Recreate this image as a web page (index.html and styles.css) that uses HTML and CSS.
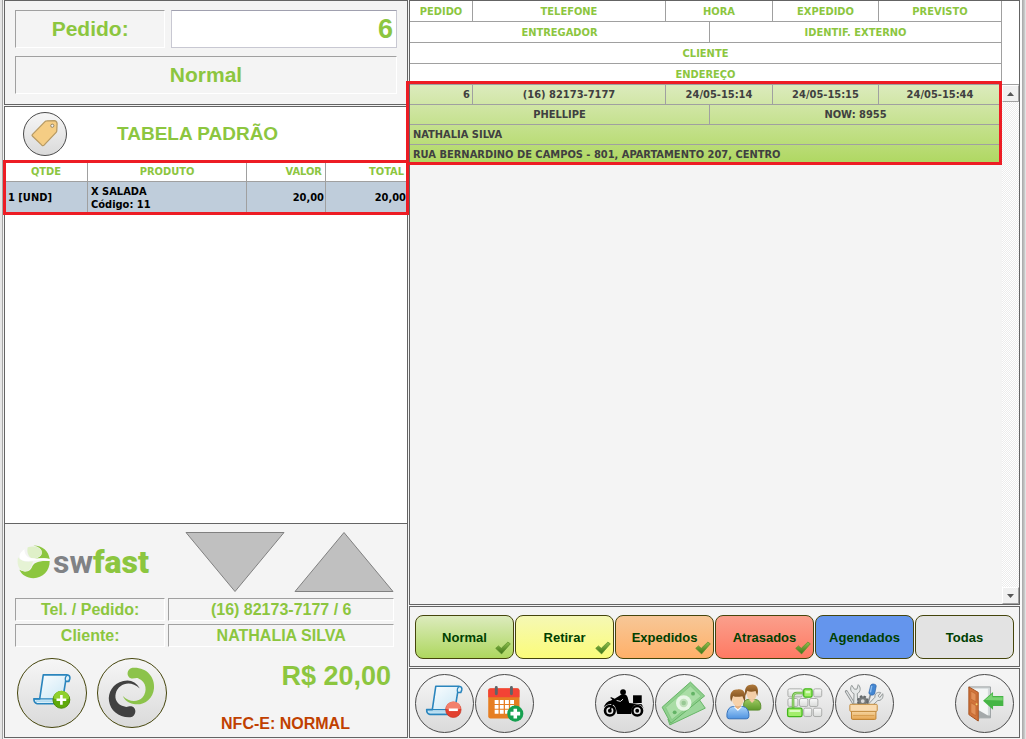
FILE: index.html
```html
<!DOCTYPE html>
<html lang="pt-BR">
<head>
  <meta charset="UTF-8">
  <meta name="viewport" content="width=device-width, initial-scale=1.0">
  <title>swfast - Delivery</title>
  <link rel="stylesheet" href="styles.css">
</head>
<body>

  <!-- shared gradients and symbols -->
  <svg class="defs" width="0" height="0" aria-hidden="true">
    <defs>
      <linearGradient id="paper" x1="0" y1="0" x2="1" y2="1">
        <stop offset="0" stop-color="#ffffff"/>
        <stop offset="1" stop-color="#c3e4f4"/>
      </linearGradient>
      <linearGradient id="check-fill" x1="0" y1="0" x2="0" y2="1">
        <stop offset="0" stop-color="#8fc24c"/>
        <stop offset="1" stop-color="#3f7318"/>
      </linearGradient>
      <linearGradient id="blue" x1="0" y1="0" x2="0" y2="1">
        <stop offset="0" stop-color="#a9d3fa"/>
        <stop offset="1" stop-color="#4f93e0"/>
      </linearGradient>
      <linearGradient id="green" x1="0" y1="0" x2="0" y2="1">
        <stop offset="0" stop-color="#9cc860"/>
        <stop offset="1" stop-color="#5e9a2c"/>
      </linearGradient>
      <linearGradient id="hair" x1="0" y1="0" x2="0" y2="1">
        <stop offset="0" stop-color="#b07a3c"/>
        <stop offset="1" stop-color="#6f4213"/>
      </linearGradient>
      <linearGradient id="wood" x1="0" y1="0" x2="0" y2="1">
        <stop offset="0" stop-color="#f6d7a4"/>
        <stop offset="1" stop-color="#e5a550"/>
      </linearGradient>
      <linearGradient id="key" x1="0" y1="0" x2="0" y2="1">
        <stop offset="0" stop-color="#fafafa"/>
        <stop offset="1" stop-color="#d9dbd9"/>
      </linearGradient>
    </defs>
    <symbol id="scroll" viewBox="0 0 120 100">
      <path d="M33 6H106Q117 7 115 18L112 26H102L92 88Q92 95 84 95H14Q4 93 4 80H22Z" fill="url(#paper)" stroke="#2a85bd" stroke-width="5" stroke-linejoin="round"/>
      <path d="M102 26Q98 12 108 7M4 80H78Q78 92 86 95" fill="none" stroke="#2a85bd" stroke-width="4"/>
      <path d="M10 87H74" stroke="#b4dcf0" stroke-width="5"/>
    </symbol>
    <symbol id="check" viewBox="0 0 46 38">
      <path d="M2 20L10 13L18 20L37 2L44 7L19 36Z" fill="url(#check-fill)" stroke="#5a8d2b" stroke-width="2" stroke-linejoin="round"/>
    </symbol>
  </svg>

  <main class="screen">
    <section class="left">
      <div class="panel order-info">
        <div class="pair">
          <label class="field big" for="pedido">Pedido:</label>
          <input class="order-number" id="pedido" type="text" value="6">
        </div>
        <div class="field big">Normal</div>
      </div>

      <div class="panel items">
        <div class="price-table">
          <button class="round small" type="button" aria-label="Tabela de preço">
            <svg viewBox="0 0 132 132">
              <path d="M26 68L66 27Q68 25 71 25L95 24Q103 25 104 33L103 56Q103 59 101 61L63 101Q60 104 56 101L27 73Q24 70 26 68Z" fill="#f5cd84" stroke="#b79a63" stroke-width="4"/>
              <circle cx="89" cy="40" r="5" fill="#f4f4f4" stroke="#8d8064" stroke-width="3"/>
            </svg>
          </button>
          <h2>TABELA PADRÃO</h2>
        </div>
        <div class="marked items-mark">
          <table class="items-table">
            <colgroup>
              <col class="c-qty"><col class="c-product"><col class="c-value"><col class="c-total">
            </colgroup>
            <thead>
              <tr>
                <th>QTDE</th>
                <th>PRODUTO</th>
                <th class="num">VALOR</th>
                <th class="num">TOTAL</th>
              </tr>
            </thead>
            <tbody>
              <tr>
                <td>1 [UND]</td>
                <td>X SALADA<br>Código: 11</td>
                <td class="num">20,00</td>
                <td class="num">20,00</td>
              </tr>
            </tbody>
          </table>
        </div>
      </div>

      <div class="panel summary">
        <div class="summary-top">
          <div class="logo">
            <svg class="logo-mark" viewBox="0 0 98 100" aria-hidden="true">
              <path d="M49 1C76 1 94 18 97 41C80 37 68 41 52 40C70 36 76 28 73 17C70 8 60 4 49 1Z" fill="#8cc63f"/>
              <path d="M32 6C48 0 70 6 73 17C77 32 58 40 46 39C34 37 28 20 32 6Z" fill="#dff0c8"/>
              <path d="M97 47C98 76 76 98 49 98C29 98 14 88 7 73C25 82 38 79 44 66C49 52 62 45 97 47Z" fill="#8cc63f"/>
              <path d="M3 36C12 48 26 51 48 48C42 66 38 82 18 77C5 73 -1 55 3 36Z" fill="#e6f3d5"/>
              <path d="M22 12C4 24 2 42 20 46C45 49 68 41 97 46V41C80 37 68 41 46 39C30 38 22 27 22 12Z" fill="#ffffff"/>
            </svg>
            <span class="logo-text">sw<b>fast</b></span>
          </div>
          <div class="arrows">
            <button class="arrow" type="button" aria-label="Descer">
              <svg viewBox="0 0 100 60"><path d="M1 .5H99L50 59.5Z"/></svg>
            </button>
            <button class="arrow" type="button" aria-label="Subir">
              <svg viewBox="0 0 100 60"><path d="M1 59.5H99L50 .5Z"/></svg>
            </button>
          </div>
        </div>
        <div class="details">
          <div class="field">Tel. / Pedido:</div>
          <div class="field">(16) 82173-7177 / 6</div>
          <div class="field">Cliente:</div>
          <div class="field">NATHALIA SILVA</div>
        </div>
        <div class="summary-bottom">
          <button class="round large" type="button" aria-label="Novo pedido">
            <svg viewBox="0 0 210 210">
              <use href="#scroll" x="45" y="43" width="120" height="100"/>
              <circle cx="134" cy="126" r="26" fill="#5faa0a" stroke="#4a8608" stroke-width="3"/>
              <path d="M110 122A24 24 0 0 1 158 122Q134 132 110 122Z" fill="#8fd02c"/>
              <path d="M134 111V141M119 126H149" stroke="#fff" stroke-width="8"/>
            </svg>
          </button>
          <button class="round large" type="button" aria-label="Swfast">
            <svg viewBox="0 0 210 210">
              <path d="M106 27C150 24 176 55 173 90C170 125 140 145 110 139C92 135 82 126 77 114C95 133 122 135 138 118C153 100 150 70 125 60C118 57 110 62 103 60C86 56 88 30 106 27Z" fill="#8cc34b"/>
              <path d="M129 91C118 70 98 62 78 68C45 76 30 105 34 130C38 160 65 182 100 180C118 178 122 150 103 146C95 145 90 150 82 147C60 142 50 125 55 106C63 76 100 64 129 91Z" fill="#414141"/>
            </svg>
          </button>
          <div class="totals">
            <strong class="price">R$ 20,00</strong>
            <strong class="invoice">NFC-E: NORMAL</strong>
          </div>
        </div>
      </div>
    </section>

    <section class="right">
      <div class="panel orders">
        <div class="orders-list">
          <table class="orders-table">
            <colgroup>
              <col class="o1"><col class="o2"><col class="o3"><col class="o4"><col class="o5"><col class="o6">
            </colgroup>
            <thead>
              <tr><th>PEDIDO</th><th>TELEFONE</th><th colspan="2">HORA</th><th>EXPEDIDO</th><th>PREVISTO</th></tr>
              <tr><th colspan="3">ENTREGADOR</th><th colspan="3">IDENTIF. EXTERNO</th></tr>
              <tr><th colspan="6">CLIENTE</th></tr>
              <tr><th colspan="6">ENDEREÇO</th></tr>
            </thead>
          </table>
          <div class="marked orders-mark">
            <table class="orders-table">
              <colgroup>
                <col class="o1"><col class="o2"><col class="o3"><col class="o4"><col class="o5"><col class="o6">
              </colgroup>
              <tbody>
                <tr><td class="num">6</td><td>(16) 82173-7177</td><td colspan="2">24/05-15:14</td><td>24/05-15:15</td><td>24/05-15:44</td></tr>
                <tr><td colspan="3">PHELLIPE</td><td colspan="3">NOW: 8955</td></tr>
                <tr><td class="text" colspan="6">NATHALIA SILVA</td></tr>
                <tr><td class="text" colspan="6">RUA BERNARDINO DE CAMPOS - 801, APARTAMENTO 207, CENTRO</td></tr>
              </tbody>
            </table>
          </div>
        </div>
        <div class="scroll-side">
          <div class="scroll-head"></div>
          <div class="scrollbar">
            <button type="button" aria-label="Rolar para cima"><svg viewBox="0 0 7 4"><path d="M0 4L3.5 0L7 4Z"/></svg></button>
            <button type="button" aria-label="Rolar para baixo"><svg viewBox="0 0 7 4"><path d="M0 0L3.5 4L7 0Z"/></svg></button>
          </div>
        </div>
      </div>

      <div class="panel filters">
        <button class="filter normal" type="button">Normal<svg class="check"><use href="#check"/></svg></button>
        <button class="filter retirar" type="button">Retirar<svg class="check"><use href="#check"/></svg></button>
        <button class="filter expedidos" type="button">Expedidos<svg class="check"><use href="#check"/></svg></button>
        <button class="filter atrasados" type="button">Atrasados<svg class="check"><use href="#check"/></svg></button>
        <button class="filter agendados" type="button">Agendados</button>
        <button class="filter todas" type="button">Todas</button>
      </div>

      <div class="panel tools">
        <div class="tool-group">
          <button class="round" type="button" aria-label="Cancelar pedido">
            <svg viewBox="0 0 177 177">
              <use href="#scroll" x="29" y="28" width="118" height="100"/>
              <circle cx="116" cy="108" r="24" fill="#e2402f" stroke="#c3301f" stroke-width="2"/>
              <path d="M93 105A23 23 0 0 1 139 105Q116 113 93 105Z" fill="#f3806c"/>
              <path d="M102 108H130" stroke="#fff" stroke-width="8"/>
            </svg>
          </button>
          <button class="round" type="button" aria-label="Agendar pedido">
            <svg viewBox="0 0 177 177">
              <rect x="38" y="42" width="97" height="93" rx="7" fill="#e67e22"/>
              <path d="M38 69V48Q38 41 45 41H128Q135 41 135 48V69Z" fill="#f34335"/>
              <path d="M63 39V58M110 39V58" stroke="#5d6468" stroke-width="9" stroke-linecap="round"/>
              <path d="M58 84H118M58 99H118M58 114H118" stroke="#fff" stroke-width="12" stroke-dasharray="12 4"/>
              <circle cx="122" cy="120" r="25" fill="#16a050"/>
              <path d="M122 105V135M107 120H137" stroke="#fff" stroke-width="11"/>
            </svg>
          </button>
        </div>
        <div class="tool-group">
          <button class="round" type="button" aria-label="Entregadores">
            <svg viewBox="0 0 177 177">
              <circle cx="43" cy="111" r="15" fill="none" stroke="#000" stroke-width="8"/>
              <circle cx="128" cy="111" r="15" fill="none" stroke="#000" stroke-width="8"/>
              <circle cx="43" cy="111" r="6"/>
              <circle cx="128" cy="111" r="6"/>
              <circle cx="84" cy="53" r="9"/>
              <path d="M115 63H142V87H115Z"/>
              <path d="M46 68L58 74L74 64C81 58 94 58 98 68L103 87L142 91L149 105C139 87 117 88 111 105L109 121H66L62 105C57 88 43 84 24 100C30 85 39 80 47 79L51 75L45 72Z"/>
              <path d="M56 75L43 111" stroke="#000" stroke-width="5"/>
              <path d="M64 79L76 82L84 75" fill="none" stroke="#e6e6e6" stroke-width="3"/>
            </svg>
          </button>
          <button class="round" type="button" aria-label="Pagamento">
            <svg viewBox="0 0 177 177">
              <path d="M37 137L130 70L153 103L43 155Z" fill="#9bd69a" stroke="#65b465" stroke-width="3"/>
              <path d="M19 100L107 22L151 65L46 150Z" fill="#8fd08d" stroke="#62b162" stroke-width="3"/>
              <path d="M30 101L107 34L140 66L49 139Z" fill="#a9dda5" stroke="#7bc47b" stroke-width="2"/>
              <circle cx="115" cy="58" r="6" fill="#63b365"/>
              <circle cx="58" cy="116" r="6" fill="#63b365"/>
              <circle cx="86" cy="87" r="24" fill="#e8f6e6"/>
              <circle cx="86" cy="87" r="13" fill="#bfe0ba"/>
              <circle cx="86" cy="87" r="7" fill="#98c995"/>
            </svg>
          </button>
          <button class="round" type="button" aria-label="Clientes">
            <svg viewBox="0 0 177 177">
              <path d="M86 107V90Q88 76 101 76H122Q137 78 139 94V104Q138 109 132 109H91Z" fill="url(#green)" stroke="#5b8d2e" stroke-width="3"/>
              <path d="M102 76L112 87L122 76Z" fill="#f2c9a0"/>
              <ellipse cx="111" cy="58" rx="16" ry="20" fill="#f3cda6"/>
              <path d="M92 65C86 42 95 29 110 30C126 28 135 42 128 65L123 50Q106 54 97 49Z" fill="url(#hair)"/>
              <path d="M34 130V120Q37 100 52 98H84Q100 101 102 121V129Q101 136 94 136H41Q35 136 34 130Z" fill="url(#blue)" stroke="#326fb8" stroke-width="3"/>
              <path d="M54 98L68 112L82 98Z" fill="#ffffff"/>
              <path d="M59 91H77V99L68 106L59 99Z" fill="#e5b283"/>
              <ellipse cx="68" cy="75" rx="18" ry="22" fill="#f7d2aa"/>
              <path d="M47 83C39 58 50 43 67 45C86 42 96 57 89 83L82 66Q62 70 53 65Z" fill="url(#hair)"/>
            </svg>
          </button>
          <button class="round" type="button" aria-label="Teclado">
            <svg viewBox="0 0 177 177">
              <g fill="url(#key)" stroke="#a9aba9" stroke-width="3">
                <rect x="37" y="43" width="45" height="25" rx="5"/>
                <rect x="117" y="43" width="25" height="25" rx="5"/>
                <rect x="37" y="73" width="31" height="25" rx="5"/>
                <rect x="73" y="73" width="26" height="25" rx="5"/>
                <rect x="104" y="73" width="26" height="25" rx="5"/>
                <rect x="86" y="103" width="25" height="26" rx="5"/>
                <rect x="116" y="103" width="26" height="26" rx="5"/>
              </g>
              <path d="M53 106V68Q53 56 65 56H88" fill="none" stroke="#6db548" stroke-width="8"/>
              <path d="M53 106V68Q53 56 65 56H88" fill="none" stroke="#a4de82" stroke-width="3"/>
              <g fill="#a3ee6c" stroke="#43b51c" stroke-width="4">
                <rect x="86" y="43" width="26" height="26" rx="5"/>
                <rect x="36" y="103" width="45" height="26" rx="5"/>
              </g>
              <path d="M92 50H106V57H92ZM42 109H75V115H42Z" fill="#d9fbc1"/>
            </svg>
          </button>
          <button class="round" type="button" aria-label="Ferramentas">
            <svg viewBox="0 0 177 177">
              <path d="M32 51L56 90" stroke="#8b8f90" stroke-width="9" stroke-linecap="round"/>
              <path d="M32 51L56 90" stroke="#dfe2e2" stroke-width="4"/>
              <path d="M49 32C42 42 46 54 56 58L55 90H68L66 58C77 53 78 38 69 30L65 44H57Z" fill="#e5e8e8" stroke="#909595" stroke-width="3"/>
              <path d="M145 58C149 70 140 81 130 79L109 98L101 90L121 69C119 58 130 51 139 55L131 65L136 70Z" fill="#e5e8e8" stroke="#909595" stroke-width="3"/>
              <path d="M107 61L98 91" stroke="#8b8f90" stroke-width="5"/>
              <path d="M108 31Q111 27 117 28Q125 29 125 34L120 59Q116 64 108 62Q102 60 102 55Z" fill="#4387d3" stroke="#2b60a2" stroke-width="2"/>
              <path d="M111 34L107 54" stroke="#92c0ef" stroke-width="4"/>
              <circle cx="83" cy="81" r="15" fill="#777b7c" stroke="#63686a" stroke-width="6" stroke-dasharray="7 5"/>
              <circle cx="83" cy="81" r="6" fill="#dadada"/>
              <path d="M48 112H124V135Q124 138 120 138H52Q48 138 48 134Z" fill="url(#wood)" stroke="#bd812f" stroke-width="3"/>
              <rect x="43" y="91" width="85" height="22" rx="3" fill="#f9dbb0" stroke="#c18a3c" stroke-width="3"/>
              <path d="M53 126H119" stroke="#c98b39" stroke-width="2"/>
            </svg>
          </button>
        </div>
        <div class="tool-group">
          <button class="round" type="button" aria-label="Sair">
            <svg viewBox="0 0 177 177">
              <path d="M40 37H107V133H72L68 142Z" fill="#d5dadb" stroke="#9aa0a2" stroke-width="3"/>
              <path d="M49 43H99V126H68Z" fill="#f4f6f6"/>
              <path d="M68 108L99 126H107V133H68Z" fill="#a4a9aa"/>
              <path d="M40 37L69 54V143L40 123Z" fill="#d1733a" stroke="#a44f1c" stroke-width="3"/>
              <path d="M46 50L62 59V83L46 75ZM46 86L62 95V127L46 117Z" fill="#e18f57" stroke="#b9632c" stroke-width="2"/>
              <circle cx="64" cy="91" r="3" fill="#f5d36b"/>
              <path d="M84 80L115 53V65H147V96H115V108Z" fill="#45b545"/>
              <path d="M90 78L113 58V69H145V79Z" fill="#79d373"/>
            </svg>
          </button>
        </div>
      </div>
    </section>
  </main>

</body>
</html>
```
FILE: styles.css
```css
* {
  box-sizing: border-box;
}

body {
  margin: 0;
  background: #f4f4f4;
  color: #8cc63f;
  font-family: "Liberation Sans", Arial, sans-serif;
  font-weight: bold;
}

button {
  padding: 0;
  font: inherit;
  cursor: pointer;
}

svg {
  display: block;
}

.defs {
  position: absolute;
}

.screen {
  display: grid;
  grid-template-columns: minmax(0, 404fr) minmax(0, 611fr);
  gap: 1px;
  min-height: 100vh;
  padding: 0 6px 1px 4px;
  background:
    linear-gradient(to right, #e6e6e6 0 2px, #a6a6a6 2px 3px, #f4f4f4 3px) left / 4px 100% no-repeat,
    linear-gradient(to right, #fafafa 0 2px, #a6a6a6 2px, #d0d0d0 5px, #f4f4f4 6px) right / 6px 100% no-repeat;
}

.left,
.right {
  display: flex;
  flex-direction: column;
}

.right {
  gap: 1px;
}

.panel {
  border: 1px solid #646464;
  background: #f4f4f4;
}

/* etched boxes */
.field {
  display: flex;
  align-items: center;
  justify-content: center;
  height: 23px;
  border: 1px solid;
  border-color: #a0a0a0 #fff #fff #a0a0a0;
  font-size: 16px;
}

.field.big {
  height: 38px;
  font-size: 21px;
}

.order-info {
  display: flex;
  flex-direction: column;
  gap: 8px;
  margin-bottom: 1px;
  padding: 9px 10px 10px;
}

.pair {
  display: grid;
  grid-template-columns: 2fr 3fr;
  gap: 6px;
}

.order-number {
  width: 100%;
  height: 38px;
  padding: 0 3px;
  border: 1px solid #c8c8d2;
  border-top-color: #a0a0af;
  border-radius: 0;
  background: #fff;
  color: #8cc63f;
  font: bold 27px "Liberation Sans", Arial, sans-serif;
  text-align: right;
}

/* items */
.items {
  flex: 1;
  border-bottom: 0;
  background: #fff;
}

.price-table {
  display: flex;
  align-items: center;
  gap: 50px;
  height: 55px;
  padding: 0 18px 2px;
}

.price-table h2 {
  margin: 0;
  font-size: 19px;
}

.round {
  flex: none;
  width: 59px;
  height: 59px;
  border: 1px solid #4a4a4a;
  border-radius: 50%;
  background: linear-gradient(#f6f6f6, #dadada);
}

.round.small {
  width: 44px;
  height: 44px;
}

.round.large {
  width: 70px;
  height: 70px;
  border-color: #45450c;
}

.round svg {
  width: 100%;
  height: 100%;
}

.marked {
  position: relative;
}

.marked::after {
  content: "";
  position: absolute;
  z-index: 1;
  border: 3px solid #ed1c24;
  pointer-events: none;
}

.items-mark::after {
  inset: -2px;
}

.orders-mark::after {
  inset: -4px 0 0 -4px;
}

table {
  width: 100%;
  border-spacing: 0;
  table-layout: fixed;
  font-family: Tahoma, "DejaVu Sans Condensed", sans-serif;
  font-size: 11px;
}

th,
td {
  padding: 0 3px;
  border-right: 1px solid #a0a0a0;
  border-bottom: 1px solid #a0a0a0;
  white-space: nowrap;
}

.num {
  text-align: right;
}

.items-table th {
  height: 20px;
}

.items-table td {
  height: 31px;
  border-bottom: 0;
  background: #bfcddb;
  color: #000;
  line-height: 13px;
}

.items-table .num {
  padding-right: 1px;
}

.items-table th.num {
  padding-right: 3px;
}

.items-table th:last-child,
.items-table td:last-child {
  border-right: 0;
}

.c-qty { width: 83px; }
.c-value { width: 79px; }
.c-total { width: 81px; }

/* summary */
.summary {
  padding: 8px 13px 4px 10px;
}

.summary-top {
  display: flex;
  justify-content: space-between;
  height: 66px;
}

.logo {
  display: flex;
  align-items: center;
  gap: 3px;
  height: 60px;
  padding-left: 2px;
}

.logo-mark {
  width: 33px;
  height: 34px;
}

.logo-text {
  color: #808285;
  font-family: Roboto, sans-serif;
  font-size: 32px;
  line-height: 34px;
}

.logo-text b {
  color: #8cc63f;
}

.arrows {
  display: flex;
  gap: 9px;
}

.arrow {
  width: 100px;
  height: 60px;
  border: 0;
  background: none;
}

.arrow path {
  fill: #c0c0c0;
  stroke: #808080;
}

.details {
  display: grid;
  grid-template-columns: 2fr 3fr;
  gap: 3px;
}

.summary-bottom {
  display: flex;
  gap: 10px;
  margin-top: 11px;
  padding-left: 2px;
}

.totals {
  display: flex;
  flex: 1;
  flex-direction: column;
  justify-content: space-between;
  height: 75px;
}

.price {
  padding-right: 3px;
  font-size: 27px;
  line-height: 36px;
  text-align: right;
}

.invoice {
  color: #c04000;
  font-size: 16px;
  line-height: 18px;
  text-align: center;
}

/* orders */
.orders {
  display: flex;
  flex: 1;
}

.orders-list {
  flex: 1;
  min-width: 0;
}

.orders-table th {
  height: 21px;
  padding-top: 1px;
  background: #fff;
}

.orders-table tbody {
  background: linear-gradient(#dcebbd, #aed75f);
  color: #404040;
}

.orders-table td {
  height: 20px;
  text-align: center;
}

.orders-table td.num {
  padding-right: 2px;
  text-align: right;
}

.orders-table td.text {
  text-align: left;
}

.o1 { width: 63px; }
.o3 { width: 44px; }
.o4 { width: 63px; }
.o5 { width: 106px; }
.o6 { width: 123px; }

.scroll-side {
  display: flex;
  flex-direction: column;
  width: 17px;
}

.scroll-head {
  height: 84px;
  border-bottom: 1px solid #a0a0a0;
  background: #fff;
}

.scrollbar {
  display: flex;
  flex: 1;
  flex-direction: column;
  justify-content: space-between;
  background: repeating-conic-gradient(#fff 0 25%, #ececec 0 50%) 0 0 / 2px 2px;
}

.scrollbar button {
  display: flex;
  align-items: center;
  justify-content: center;
  width: 17px;
  height: 17px;
  border: 1px solid;
  border-color: #fff #a0a0a0 #a0a0a0 #fff;
  background: #f0f0f0;
}

.scrollbar svg {
  width: 7px;
  height: 4px;
  fill: #555;
}

/* filters */
.filters {
  display: grid;
  grid-template-columns: repeat(6, minmax(0, 1fr));
  gap: 1px;
  padding: 8px 5px 7px;
}

.filter {
  position: relative;
  height: 44px;
  border: 1px solid #45450c;
  border-radius: 8px;
  color: #004000;
  font-size: 13px;
}

.check {
  position: absolute;
  right: 2px;
  bottom: 3px;
  width: 16px;
  height: 14px;
}

.normal { background: linear-gradient(#dcebbd, #aed75f); }
.retirar { background: linear-gradient(#f5f8b4, #fbfc7a); }
.expedidos { background: linear-gradient(#f7c797, #ffb069); }
.atrasados { background: linear-gradient(#fa9f8c, #ff7a63); }
.agendados { background: #6495ed; }
.todas { background: #e3e3e3; }

.tools {
  display: flex;
  justify-content: space-between;
  padding: 5px 5px 4px;
}

.tool-group {
  display: flex;
  gap: 1px;
}
```
